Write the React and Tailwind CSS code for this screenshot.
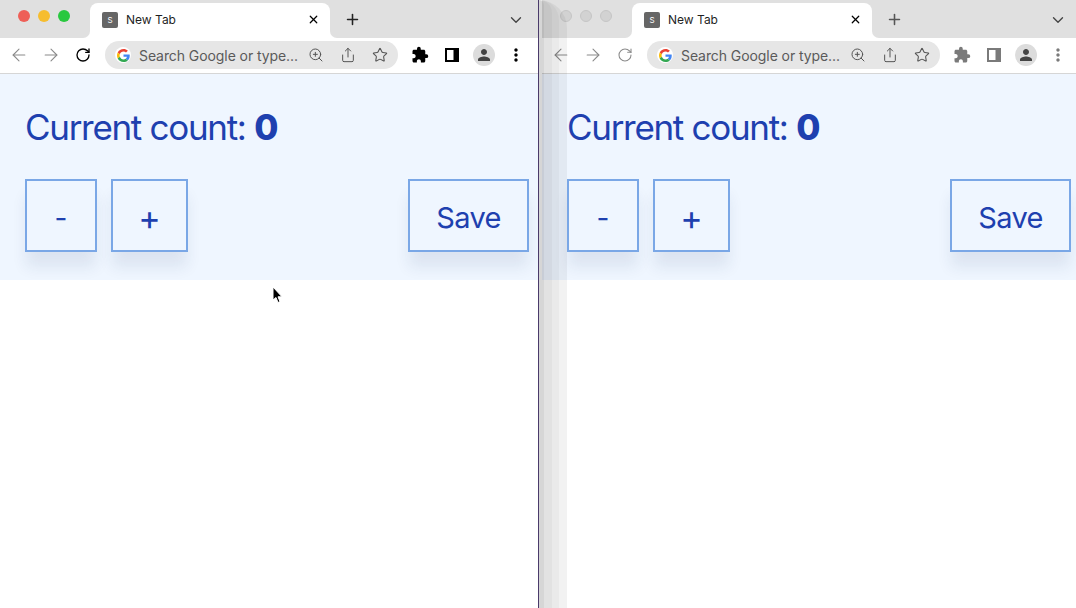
import React from 'react';
import { ArrowLeft, ArrowRight, ChevronDown, Plus, RotateCw, Share, Star, X, ZoomIn } from 'lucide-react';
import { MdExtension, MdMoreVert, MdPerson } from 'react-icons/md';

const GoogleG = () => (
  <svg width="13" height="13" viewBox="0 0 48 48">
    <path fill="#EA4335" d="M24 9.5c3.5 0 6.700 1.200 9.200 3.600l6.900-6.900C35.900 2.400 30.500 0 24 0 14.600 0 6.500 5.400 2.600 13.200l8 6.200C12.500 13.600 17.800 9.500 24 9.500z" />
    <path fill="#4285F4" d="M47 24.500c0-1.600-.1-3.100-.4-4.500H24v9h12.900c-.6 3-2.200 5.500-4.700 7.200l7.700 6C44.400 38 47 31.800 47 24.500z" />
    <path fill="#FBBC05" d="M10.600 28.600A14.500 14.500 0 0 1 9.500 24c0-1.600.3-3.200 1.100-4.600l-8-6.200A24 24 0 0 0 0 24c0 3.900.9 7.500 2.600 10.800l8-6.200z" />
    <path fill="#34A853" d="M24 48c6.500 0 11.900-2.100 15.900-5.800l-7.700-6c-2.100 1.400-4.900 2.300-8.200 2.300-6.200 0-11.500-4.100-13.400-9.900l-8 6.200C6.500 42.600 14.600 48 24 48z" />
  </svg>
);

const Cell = ({ children, className = 'w-8' }) => (
  <div className={`${className} h-7 flex items-center justify-center shrink-0`}>{children}</div>
);

const CountButton = ({ children, className }) => (
  <button className={`h-[73px] border-2 border-[#7aa7e6] bg-blue-50 text-[#1e40af] shadow-[0_16px_14px_-1px_rgba(30,50,100,0.09)] flex items-center justify-center pt-1 ${className}`}>
    {children}
  </button>
);

const BrowserWindow = ({ active }) => {
  const toolColor = active ? 'text-black' : 'text-[#7a7a7a]';

  return (
    <div className="w-[538px] h-full shrink-0 flex flex-col bg-white">
      {/* Tab strip */}
      <div className="h-[38px] bg-[#e0e0e0] flex items-end">
        <div className="h-full pl-[18px] pr-5 flex items-center gap-2 pb-[6px]">
          <span className={`w-3 h-3 rounded-full ${active ? 'bg-[#ee5f57]' : 'bg-[#d2d2d2] border border-[#c6c6c6]'}`} />
          <span className={`w-3 h-3 rounded-full ${active ? 'bg-[#f6bd2f]' : 'bg-[#d2d2d2] border border-[#c6c6c6]'}`} />
          <span className={`w-3 h-3 rounded-full ${active ? 'bg-[#29c83f]' : 'bg-[#d2d2d2] border border-[#c6c6c6]'}`} />
        </div>
        <div className="relative w-[240px] h-[35px] bg-white rounded-t-lg flex items-center pl-3 pr-[10px] pb-[2px]">
          <div className="absolute -left-[7px] bottom-0 w-[7px] h-[7px] bg-white">
            <div className="w-full h-full bg-[#e0e0e0] rounded-br-[7px]" />
          </div>
          <div className="absolute -right-[7px] bottom-0 w-[7px] h-[7px] bg-white">
            <div className="w-full h-full bg-[#e0e0e0] rounded-bl-[7px]" />
          </div>
          <div className="w-4 h-4 rounded-[2px] bg-[#666666] text-white text-[8px] flex items-center justify-center">S</div>
          <span className="ml-2 text-[12px] text-[#1f1f1f]">New Tab</span>
          <X size={13} strokeWidth={2.2} className="ml-auto text-black" />
        </div>
        <div className="h-[35px] ml-[6px] w-8 flex items-center justify-center pb-[2px]">
          <Plus size={17} strokeWidth={2.2} className={active ? 'text-[#222222]' : 'text-[#555555]'} />
        </div>
        <div className="h-[35px] ml-auto mr-[6px] w-8 flex items-center justify-center pb-[2px]">
          <ChevronDown size={18} strokeWidth={1.8} className="text-[#444444]" />
        </div>
      </div>

      {/* Toolbar */}
      <div className="h-9 flex items-center pl-[2px] pr-[6px] pb-px border-b border-[#d6d6d6] bg-white">
        <Cell className="w-[33px]"><ArrowLeft size={20} strokeWidth={1.3} className="text-[#8a8a8a]" /></Cell>
        <Cell><ArrowRight size={20} strokeWidth={1.3} className="text-[#8a8a8a]" /></Cell>
        <Cell><RotateCw size={16} strokeWidth={active ? 2 : 1.6} className={active ? 'text-black' : 'text-[#8a8a8a]'} /></Cell>
        <div className="ml-[6px] w-[293px] h-7 rounded-full bg-[#e6e6e6] flex items-center pl-[10px] pr-[2px] shrink-0">
          <div className="w-4 h-4 rounded-full bg-white flex items-center justify-center shrink-0">
            <GoogleG />
          </div>
          <span className="ml-2 flex-1 min-w-0 text-[14px] tracking-[-0.08px] text-[#5a5a5a] whitespace-nowrap">Search Google or type...</span>
          <Cell><ZoomIn size={16} strokeWidth={1.5} className="text-[#555555]" /></Cell>
          <Cell><Share size={16} strokeWidth={1.5} className="text-[#555555]" /></Cell>
          <Cell><Star size={16} strokeWidth={1.6} className="text-[#555555]" /></Cell>
        </div>
        <Cell className="w-8 ml-[6px]"><MdExtension size={18} className={toolColor} /></Cell>
        <Cell>
          <svg width="14" height="14" viewBox="0 0 14 14">
            <rect x="1" y="1" width="12" height="12" fill="none" stroke={active ? '#000' : '#7a7a7a'} strokeWidth="2" />
            <rect x="8.500" y="1" width="4.500" height="12" fill={active ? '#000' : '#7a7a7a'} />
          </svg>
        </Cell>
        <Cell>
          <div className="w-[22px] h-[22px] rounded-full bg-[#dcdcdc] flex items-center justify-center">
            <MdPerson size={18} className="text-[#444444]" />
          </div>
        </Cell>
        <Cell><MdMoreVert size={20} className={toolColor} /></Cell>
      </div>

      {/* Page content */}
      <div className="bg-blue-50 pl-[25px] pr-[9px] pt-[33px] pb-7">
        <div className="h-10 text-[35px] leading-10 tracking-[-1.3px] text-[#1e40af] whitespace-nowrap">
          Current count: <span className="font-extrabold tracking-[-0.5px]">0</span>
        </div>
        <div className="mt-8 flex items-center gap-[14px]">
          <CountButton className="w-[72px] text-[28px]">-</CountButton>
          <CountButton className="w-[77px] text-[34px]">+</CountButton>
          <CountButton className="w-[121px] ml-auto text-[29px] tracking-[-0.6px]">Save</CountButton>
        </div>
      </div>
    </div>
  );
};

const App = () => {
  return (
    <div className="relative w-[1076px] h-[608px] overflow-hidden flex bg-white font-['Inter',sans-serif]">
      <BrowserWindow active />
      <div className="w-px h-full shrink-0 bg-[#4a3a6a]" />
      <div className="w-[3px] h-full shrink-0 bg-white" />
      <BrowserWindow />

      {/* Left window's drop shadow falling on the right one, in the GIF's flat steps */}
      <div className="absolute left-[539px] top-0 w-7 h-full pointer-events-none bg-black/5 rounded-tr-[28px]">
        <div className="w-5 h-full bg-black/[0.03] rounded-tr-[20px]">
          <div className="w-[13px] h-full bg-black/[0.03] rounded-tr-[13px]">
            <div className="w-[5px] h-full bg-black/5 rounded-tr-[5px]" />
          </div>
        </div>
      </div>

      {/* Mouse cursor */}
      <svg className="absolute left-[272px] top-[286px]" width="12" height="18" viewBox="0 0 12 18">
        <path d="M1 1 L1 14 L4 11.500 L6 16.500 L8 15.600 L6 10.800 L10 10.800 Z" fill="#000" stroke="#fff" strokeWidth="1" />
      </svg>
    </div>
  );
};

export default App;
